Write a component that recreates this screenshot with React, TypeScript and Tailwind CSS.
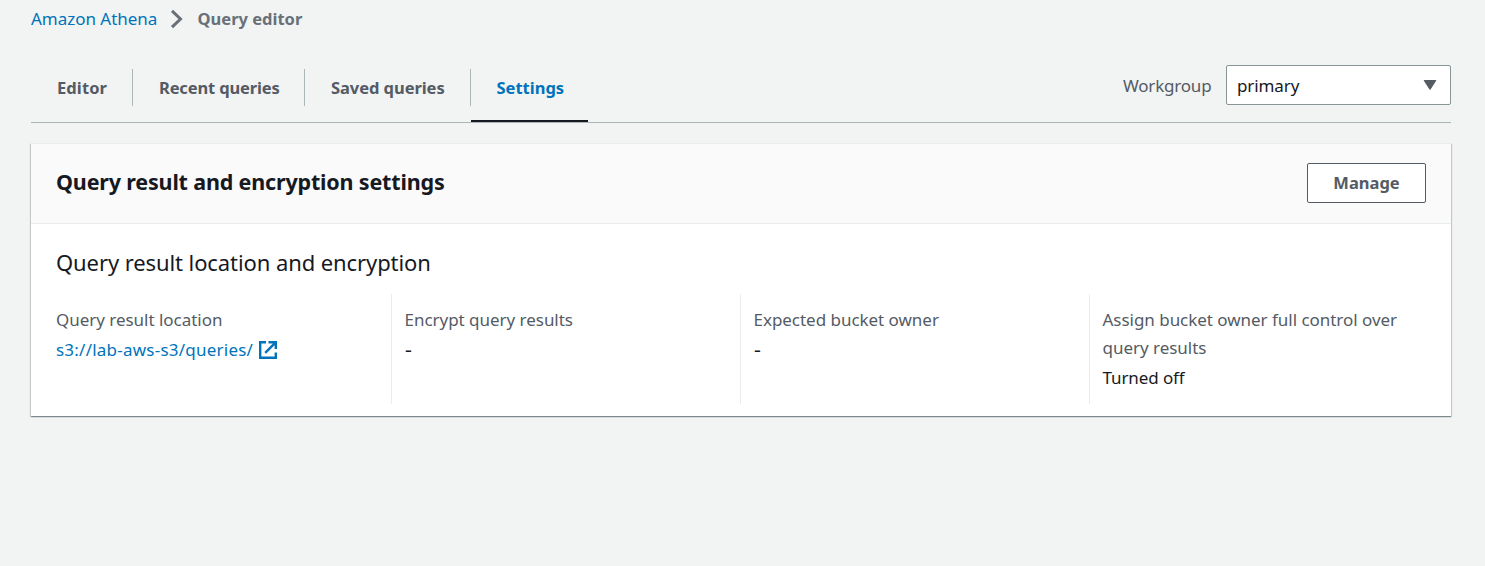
import React from "react";

const tabs = [
  { label: "Editor", width: "w-[102px]", tracking: "tracking-[0.1px]" },
  { label: "Recent queries", width: "w-[172px]", tracking: "tracking-[-0.15px]" },
  { label: "Saved queries", width: "w-[166px]", tracking: "tracking-[-0.06px]" },
  { label: "Settings", width: "w-[117px]", tracking: "tracking-[0px]", active: true },
];

function ExternalIcon() {
  return (
    <svg className="h-[18px] w-[18px] shrink-0" viewBox="0 0 18 18" fill="none" stroke="#0073bb" strokeWidth="2.4">
      <path d="M7 1.2H1.2V16.8H16.8V11.5" />
      <path d="M9.5 1.2h7.3V8M16.4 1.6L6.2 11.8" />
    </svg>
  );
}

function Field({ label, children, first }: { label: React.ReactNode; children: React.ReactNode; first?: boolean }) {
  return (
    <div className={`h-[110px] pt-3 ${first ? "pl-[14px]" : "border-l border-[#eaeded] pl-[12.5px]"}`}>
      <div className="text-[17px] leading-7 tracking-[-0.03px] whitespace-nowrap text-[#545b64]">{label}</div>
      <div className="mt-0.5 flex h-7 items-center text-[17px] leading-7 tracking-[-0.1px] whitespace-nowrap text-[#16191f]">{children}</div>
    </div>
  );
}

function EmptyValue() {
  return <span className="inline-block origin-left scale-x-125 font-medium">-</span>;
}

export default function App() {
  return (
    <div className="h-[566px] overflow-hidden bg-[#f2f3f3] pr-[34px] pl-[31px] font-['Noto_Sans',sans-serif]">
      <nav className="flex h-[38px] items-center text-[17px] leading-7">
        <a className="w-[139px] tracking-[-0.02px] text-[#0073bb]">Amazon Athena</a>
        <svg className="h-5 w-[13px]" viewBox="0 0 13 20" fill="none" stroke="#687078" strokeWidth="3">
          <path d="M2 1.8L10.5 10L2 18.2" />
        </svg>
        <span className="ml-[14.5px] text-[16.5px] font-bold text-[#687078]">Query editor</span>
      </nav>

      <div className="flex h-[85px] justify-between border-b border-[#aab7b8]">
        <div className="flex pt-[31px]">
          {tabs.map((t) => (
            <div
              key={t.label}
              className={`h-[53px] ${t.width} ${t.active ? "border-b-2 border-[#16191f]" : ""}`}
            >
              <div
                className={`flex h-[37px] items-center pt-0.5 text-[16.5px] font-bold whitespace-nowrap ${t.active ? "pl-[25.5px] text-[#0073bb]" : "border-r border-[#aab7b8] pl-[26px] text-[#545b64]"} ${t.tracking}`}
              >
                {t.label}
              </div>
            </div>
          ))}
        </div>
        <div className="mt-[27px] flex h-10 items-center">
          <label className="w-[103px] pt-0.5 text-[17px] tracking-[-0.2px] text-[#545b64]">Workgroup</label>
          <div className="flex h-10 w-[225px] items-center justify-between rounded-[2px] border border-[#879596] bg-white pr-[13px] pl-[10px] text-[17px] text-[#16191f]">
            <span className="pt-0.5 tracking-[-0.1px]">primary</span>
            <svg className="h-[12px] w-[14px]" viewBox="0 0 14 12" fill="#545b64" stroke="#545b64" strokeLinejoin="round">
              <path d="M1.2 1.5H12.8L7 10.5Z" />
            </svg>
          </div>
        </div>
      </div>

      <section className="mt-5 h-[273px] border-t border-[#eaeded] bg-white shadow-[0_1px_1px_0_rgba(0,28,36,0.3),1px_1px_1px_0_rgba(0,28,36,0.15),-1px_1px_1px_0_rgba(0,28,36,0.15)]">
        <header className="flex h-20 items-start justify-between border-b border-[#eaeded] bg-[#fafafa] px-[25px] pt-[19px]">
          <h2 className="text-[21.5px] leading-[37px] font-bold tracking-[-0.17px] text-[#16191f]">Query result and encryption settings</h2>
          <button className="h-10 w-[119px] rounded-[2px] border border-[#545b64] bg-white text-[16.5px] font-bold text-[#545b64]">Manage</button>
        </header>
        <h3 className="flex h-[70px] items-center pt-1.5 pl-[25px] text-[22px] tracking-[-0.09px] text-[#16191f]">Query result location and encryption</h3>
        <div className="grid grid-cols-4 pr-[13px] pl-[11px]">
          <Field first label="Query result location">
            <a className="flex items-center gap-[6px] text-[#0073bb]">
              <span className="tracking-[0.23px]">s3://lab-aws-s3/queries/</span>
              <ExternalIcon />
            </a>
          </Field>
          <Field label="Encrypt query results"><EmptyValue /></Field>
          <Field label="Expected bucket owner"><EmptyValue /></Field>
          <Field label={<>Assign bucket owner full control over<br />query results</>}>Turned off</Field>
        </div>
      </section>
    </div>
  );
}
